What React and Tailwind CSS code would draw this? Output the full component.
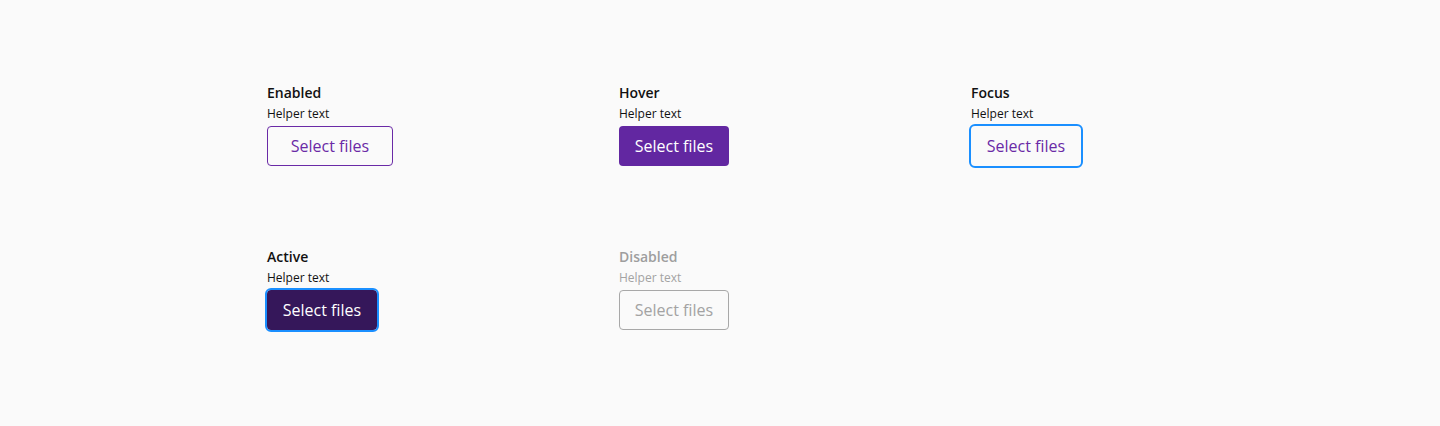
import React from "react";

function Field({ label, disabled, children }) {
  return (
    <div className="flex flex-col items-start">
      <div className={`text-[14px] leading-5 font-semibold ${disabled ? "text-[#9e9e9e]" : "text-[#111111]"}`}>{label}</div>
      <div className={`mt-[3px] text-[12px] leading-4 ${disabled ? "text-[#a3a3a3]" : "text-[#111111]"}`}>Helper text</div>
      <div className="mt-[4px]">{children}</div>
    </div>
  );
}

export default function App() {
  return (
    <div
      className="w-[1440px] h-[426px] bg-[#fafafa] pl-[267px] pt-[83px]"
      style={{ fontFamily: '"Open Sans", "Noto Sans", sans-serif' }}
    >
      <div className="grid grid-cols-[352px_352px_352px] grid-rows-[83px_83px] gap-y-[81px]">
        <Field label="Enabled">
          <button className="w-[126px] h-10 flex items-center justify-center rounded-[4px] border border-[#6a2aa6] text-[#6a2aa6] text-[16px] bg-transparent">
            Select files
          </button>
        </Field>
        <Field label="Hover">
          <button className="w-[110px] h-10 flex items-center justify-center rounded-[4px] bg-[#6227a1] text-white text-[16px]">
            Select files
          </button>
        </Field>
        <Field label="Focus">
          <button className="w-[110px] h-10 flex items-center justify-center rounded-[4px] bg-[#fafafa] text-[#6a2aa6] text-[16px] outline-2 outline-[#1a8fff] outline-offset-0">
            Select files
          </button>
        </Field>
        <Field label="Active">
          <button className="w-[110px] h-10 flex items-center justify-center rounded-[4px] bg-[#35175a] text-white text-[16px] outline-2 outline-[#1a8fff] outline-offset-0">
            Select files
          </button>
        </Field>
        <Field label="Disabled" disabled>
          <button disabled className="w-[110px] h-10 flex items-center justify-center rounded-[4px] border border-[#a8a8a8] text-[#a3a3a3] text-[16px] bg-transparent">
            Select files
          </button>
        </Field>
      </div>
    </div>
  );
}
